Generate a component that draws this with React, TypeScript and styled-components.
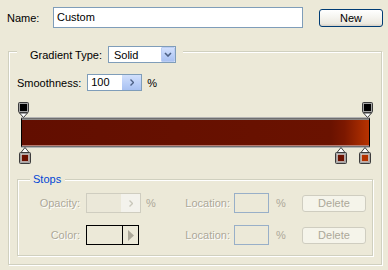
import React, {FC} from "react";
import styled, {createGlobalStyle} from "styled-components";

const GlobalStyle = createGlobalStyle`
  body {
    margin: 0;
    background: #ece9d8;
    font-family: Tahoma, "Liberation Sans", Arial, sans-serif;
    font-size: 11px;
    color: #000;
  }
`

interface Stop {
  at: number;
  color: string;
}

const opacityStops: Stop[] = [
  {at: 0, color: "#000"},
  {at: 100, color: "#000"},
];

const colorStops: Stop[] = [
  {at: 0, color: "#6a1000"},
  {at: 93, color: "#6c1200"},
  {at: 100, color: "#b33200"},
];

const Chevron: FC = () => (
  <svg width="8" height="5" viewBox="0 0 8 5">
    <path d="M1 1 L4 4 L7 1" fill="none" stroke="#4d6185" strokeWidth="1.6"/>
  </svg>
)

const RightArrow: FC<{color?: string}> = ({color = "#4d6185"}) => (
  <svg width="4" height="7" viewBox="0 0 4 7">
    <path d="M0.5 0.5 L3.5 3.5 L0.5 6.5" fill="none" stroke={color} strokeWidth="1.4"/>
  </svg>
)

const TopMarker: FC<{color: string}> = ({color}) => (
  <svg width="11" height="16" viewBox="0 0 11 16">
    <rect x="0.5" y="0.5" width="10" height="10" rx="1" fill="#a4a4a4" stroke="#3c3c3c"/>
    <rect x="2" y="2" width="7" height="7" fill={color}/>
    <path d="M1.5 11 L5.5 15.5 L9.5 11 Z" fill="#fff" stroke="#3c3c3c"/>
  </svg>
)

const BottomMarker: FC<{color: string}> = ({color}) => (
  <svg width="12" height="17" viewBox="0 0 12 17">
    <path d="M2 5.5 L6 0.5 L10 5.5 Z" fill="#fff" stroke="#3c3c3c"/>
    <rect x="0.5" y="5.5" width="11" height="11" rx="1" fill="#a4a4a4" stroke="#3c3c3c"/>
    <rect x="2.5" y="7.5" width="7" height="7" fill={color} stroke="#ddd" strokeWidth="0.6"/>
  </svg>
)

export default function App() {
  return (
    <Window>
      <GlobalStyle/>
      <TopRow>
        <NameLabel>Name:</NameLabel>
        <NameInput>Custom</NameInput>
        <Button>New</Button>
      </TopRow>

      <Group>
        <GroupHeader>
          <span>Gradient Type:</span>
          <Select>
            <span>Solid</span>
            <SelectButton><Chevron/></SelectButton>
          </Select>
        </GroupHeader>

        <SmoothRow>
          <span>Smoothness:</span>
          <SpinField>
            <SpinValue>100</SpinValue>
            <SpinButton><RightArrow/></SpinButton>
          </SpinField>
          <Pct>%</Pct>
        </SmoothRow>

        <Editor>
          <Track>
            {opacityStops.map((s, i) => (
              <Marker key={i} style={{left: 2 + s.at * 3.44 - 5}}>
                <TopMarker color={s.color}/>
              </Marker>
            ))}
          </Track>
          <Bar/>
          <Track>
            {colorStops.map((s, i) => (
              <Marker key={i} style={{left: 4 + s.at * 3.4 - 6}}>
                <BottomMarker color={s.color}/>
              </Marker>
            ))}
          </Track>
        </Editor>

        <StopsGroup>
          <StopsTitle>Stops</StopsTitle>
          <StopRow $first>
            <RowLabel>Opacity:</RowLabel>
            <DisabledSpin>
              <DisabledValue/>
              <DisabledSpinButton><RightArrow color="#c9c7ba"/></DisabledSpinButton>
            </DisabledSpin>
            <RowPct>%</RowPct>
            <LocLabel>Location:</LocLabel>
            <LocInput/>
            <LocPct>%</LocPct>
            <DisabledButton>Delete</DisabledButton>
          </StopRow>
          <StopRow>
            <RowLabel>Color:</RowLabel>
            <ColorField>
              <Swatch/>
              <ColorArrow>
                <svg width="6" height="11" viewBox="0 0 6 11">
                  <path d="M0 0 L6 5.5 L0 11 Z" fill="#aca899"/>
                </svg>
              </ColorArrow>
            </ColorField>
            <RowPct/>
            <LocLabel>Location:</LocLabel>
            <LocInput/>
            <LocPct>%</LocPct>
            <DisabledButton>Delete</DisabledButton>
          </StopRow>
        </StopsGroup>
      </Group>
    </Window>
  )
}

const Window = styled.div`
  width: 388px;
  height: 270px;
  overflow: hidden;
  background: #ece9d8;
`

const TopRow = styled.div`
  display: flex;
  align-items: center;
  padding: 7px 0 0 7px;
`

const NameLabel = styled.span`
  width: 46px;
`

const NameInput = styled.div`
  box-sizing: border-box;
  width: 250px;
  height: 21px;
  border: 1px solid #7f9db9;
  background: #fff;
  padding: 0 3px;
  line-height: 19px;
`

const Button = styled.div`
  box-sizing: border-box;
  margin-left: 16px;
  width: 64px;
  height: 18px;
  border: 1px solid #003c74;
  border-radius: 3px;
  background: linear-gradient(to bottom, #fff 0%, #f4f3ee 50%, #ece9e0 85%, #d6d0c5 100%);
  text-align: center;
  line-height: 16px;
`

const Group = styled.div`
  box-sizing: border-box;
  margin: 23px 0 0 8px;
  width: 374px;
  height: 214px;
  border: 1px solid #d0d0bf;
  box-shadow: inset 1px 1px 0 #fff, 1px 1px 0 #fff;
  display: flex;
  flex-direction: column;
  align-items: flex-start;
`

const GroupHeader = styled.div`
  display: flex;
  align-items: center;
  gap: 6px;
  margin: -6px 0 0 8px;
  padding: 0 7px 0 13px;
  background: #ece9d8;
`

const Select = styled.div`
  box-sizing: border-box;
  width: 68px;
  height: 17px;
  border: 1px solid #7f9db9;
  background: #fff;
  display: flex;
  align-items: center;
  justify-content: space-between;
  padding-left: 5px;
`

const SelectButton = styled.div`
  box-sizing: border-box;
  width: 14px;
  height: 15px;
  border: 1px solid #bbcdf3;
  border-radius: 1px;
  background: linear-gradient(to bottom, #d2e0fc 0%, #b8cdf7 60%, #a9c1f1 100%);
  display: flex;
  align-items: center;
  justify-content: center;
`

const SmoothRow = styled.div`
  display: flex;
  align-items: center;
  margin: 11px 0 0 8px;
  height: 17px;
`

const SpinField = styled.div`
  box-sizing: border-box;
  margin-left: 6px;
  width: 55px;
  height: 17px;
  border: 1px solid #7f9db9;
  background: #fff;
  display: flex;
`

const SpinValue = styled.div`
  flex: 1;
  padding-left: 3px;
  line-height: 15px;
`

const SpinButton = styled.div`
  width: 19px;
  background: linear-gradient(to bottom, #d2e0fc 0%, #b8cdf7 60%, #a9c1f1 100%);
  display: flex;
  align-items: center;
  justify-content: center;
`

const Pct = styled.span`
  margin-left: 5px;
`

const Editor = styled.div`
  margin: 11px 0 0 12px;
  width: 349px;
`

const Track = styled.div`
  position: relative;
  height: 16px;
`

const Marker = styled.div`
  position: absolute;
  top: 0;
  line-height: 0;
`

const Bar = styled.div`
  box-sizing: border-box;
  height: 29px;
  border-top: 1px solid #6f6f6f;
  border-bottom: 1px solid #6f6f6f;
  border-left: 1px solid #000;
  border-right: 1px solid #000;
  box-shadow: 0 -1px 0 #b4b4b4, 0 1px 0 #b4b4b4, inset 0 1px 0 #8a8a8a, inset 0 -1px 0 #b87a70;
  background: linear-gradient(to right, #620e00 0%, #6a1200 89%, #7c1800 93%, #b73300 100%);
`

const StopsGroup = styled.div`
  box-sizing: border-box;
  margin: 16px 0 0 8px;
  width: 356px;
  height: 77px;
  border: 1px solid #d0d0bf;
  box-shadow: inset 1px 1px 0 #fff, 1px 1px 0 #fff;
  display: flex;
  flex-direction: column;
  align-items: flex-start;
`

const StopsTitle = styled.div`
  margin: -7px 0 0 12px;
  padding: 0 4px 0 3px;
  line-height: 13px;
  background: #ece9d8;
  color: #0046d5;
`

const StopRow = styled.div<{$first?: boolean}>`
  display: flex;
  align-items: center;
  height: 20px;
  margin-top: ${({$first}) => $first ? "7px" : "12px"};
  color: #aca899;
`

const RowLabel = styled.span`
  width: 62px;
  text-align: right;
  margin-right: 6px;
  text-shadow: 1px 1px 0 #fff;
`

const DisabledSpin = styled.div`
  box-sizing: border-box;
  width: 55px;
  height: 20px;
  border: 1px solid #cfcdc0;
  background: #ebe8d9;
  display: flex;
`

const DisabledValue = styled.div`
  flex: 1;
`

const DisabledSpinButton = styled.div`
  width: 19px;
  background: #f3f2ec;
  display: flex;
  align-items: center;
  justify-content: center;
`

const RowPct = styled.span`
  width: 15px;
  padding-left: 5px;
  box-sizing: border-box;
`

const ColorField = styled.div`
  box-sizing: border-box;
  width: 53px;
  height: 20px;
  border: 1px solid #000;
  display: flex;
  margin-right: 2px;
`

const Swatch = styled.div`
  width: 35px;
  border-right: 1px solid #000;
`

const ColorArrow = styled.div`
  flex: 1;
  display: flex;
  align-items: center;
  justify-content: center;
`

const LocLabel = styled.span`
  width: 74px;
  text-align: right;
  margin-right: 4px;
  text-shadow: 1px 1px 0 #fff;
`

const LocInput = styled.div`
  box-sizing: border-box;
  width: 35px;
  height: 20px;
  border: 1px solid #98afc8;
`

const LocPct = styled.span`
  width: 33px;
  padding-left: 7px;
  box-sizing: border-box;
`

const DisabledButton = styled.div`
  box-sizing: border-box;
  width: 64px;
  height: 17px;
  border: 1px solid #cfcdc0;
  border-radius: 3px;
  background: #f5f4ea;
  text-align: center;
  line-height: 15px;
  color: #aca899;
`
